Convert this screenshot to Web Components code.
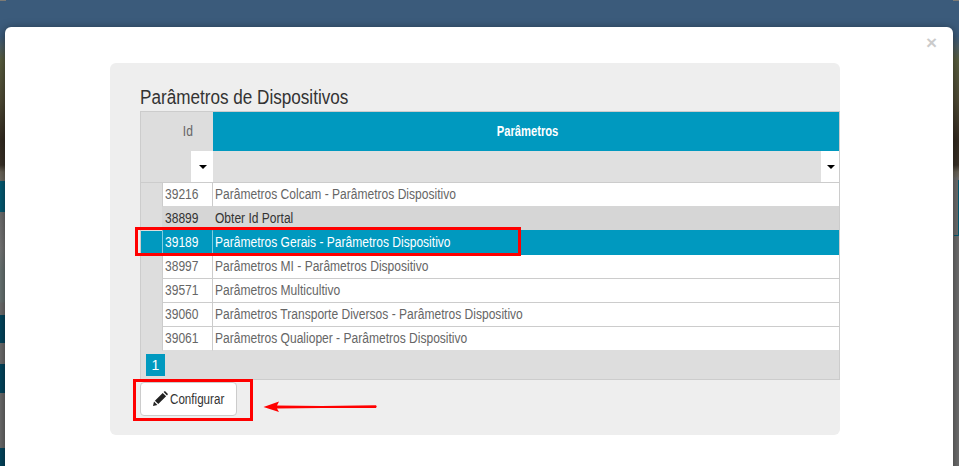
<html>
  <head>
    <meta charset="utf-8">
    <style>
      body { margin: 0; background: #666; overflow: hidden; }
    </style>
  </head>
  <body>
    <template id="tmpl-page">
      <style>
        :host {
          display: block;
          position: relative;
          width: 959px;
          height: 466px;
          overflow: hidden;
          font-family: "Liberation Sans", Arial, sans-serif;
          --blue: #0099bf;
          --line: #ccc;
          background:
            linear-gradient(#045c74, #045c74) right 180px / 1px 56px no-repeat,
            linear-gradient(#045c74, #045c74) right 235px / 5px 1px no-repeat,
            linear-gradient(to bottom,
              #7c7a74 0, #7c7a74 1px, #3b5b7b 1px, #3b5b7b 36px, #4d5f66 46px, #5b6040 60px, #504c36 100px,
              #352c22 140px, #3a3228 165px, #6a6458 172px, #706c64 177px,
              #6f6f6f 178px, #6f6f6f 466px) right top / 6px 466px no-repeat,
            linear-gradient(to bottom,
              #7c7a74 0, #7c7a74 1px, #3b5b7b 1px, #3b5b7b 36px, #4d5f66 46px, #5b6040 60px, #504c36 100px,
              #352c22 140px, #3a3228 165px, #6a6458 172px, #706c64 181px,
              #045c74 181px, #045c74 212px, #6e6e6e 212px, #777 248px, #6a7574 270px, #6a7574 302px, #6e6e6e 303px, #6e6e6e 315px,
              #03465e 315px, #03465e 343px, #6e6e6e 343px, #6e6e6e 364px,
              #03465e 364px, #03465e 393px, #6c6c6c 393px, #6c6c6c 448px,
              #03465e 448px, #03465e 466px) left top / 6px 466px no-repeat,
            #3b5b7b;
        }
        .wrap { position: relative; padding: 27px 6px 0 5px; }
      </style>
      <div class="wrap"><slot></slot></div>
      <slot name="over"></slot>
    </template>

    <template id="tmpl-modal">
      <style>
        :host {
          display: block;
          height: 460px;
          background: #fff;
          border-radius: 6px;
          box-shadow: 0 2px 10px rgba(0,0,0,.5);
        }
        .head {
          height: 36px;
          display: flex;
          justify-content: flex-end;
          padding-right: 16px;
          box-sizing: border-box;
        }
        .close {
          font-size: 19px;
          font-weight: bold;
          line-height: 32px;
          color: #000;
          opacity: .2;
        }
        .body { padding-left: 105px; }
      </style>
      <div class="head"><span class="close">×</span></div>
      <div class="body"><slot></slot></div>
    </template>

    <template id="tmpl-well">
      <style>
        :host {
          display: block;
          width: 730px;
          box-sizing: border-box;
          padding: 21px 0 19px 30px;
          background: #eee;
          border-radius: 6px;
        }
        h4 {
          margin: 0 0 1px;
          font-size: 20px;
          font-weight: normal;
          line-height: 26px;
          color: #333;
        }
        h4 span { display: inline-block; transform: scaleX(.856); transform-origin: left; white-space: nowrap; }
      </style>
      <h4><span><slot name="title"></slot></span></h4>
      <slot></slot>
    </template>

    <template id="tmpl-grid">
      <style>
        :host {
          display: block;
          width: 700px;
          box-sizing: border-box;
          border: 1px solid var(--line);
          font-size: 14px;
          background: #ddd;
        }
        .sx { display: inline-block; transform: scaleX(.86); white-space: nowrap; }
        .head { display: grid; grid-template-columns: 72px 1fr; height: 39px; line-height: 39px; }
        .head .id { padding-left: 21px; text-align: center; color: #666; }
        .head .name { padding-left: 3px; background: var(--blue); color: #fff; text-align: center; font-weight: bold; }
        .head .name .sx { transform: scaleX(.8); }
        .filter {
          display: grid;
          grid-template-columns: 50px 22px 1fr 18px;
          height: 31px;
          border-bottom: 1px solid var(--line);
        }
        .filter .blank { background: #ddd; }
        .filter .wide { background: #e0e0e0; }
        .filter .drop { background: #fff; display: flex; align-items: center; justify-content: center; }
        .drop i { width: 0; height: 0; border: 4px solid transparent; border-top-color: #000; border-bottom-width: 0; margin: 1px 0 0 2px; }
        .pager { height: 28px; box-sizing: border-box; padding: 3px 5px; background: #ddd; }
        .pager span {
          display: block;
          width: 19px;
          height: 22px;
          line-height: 22px;
          text-align: center;
          background: var(--blue);
          color: #fff;
        }
      </style>
      <div class="head"><div class="id"><span class="sx">Id</span></div><div class="name"><span class="sx">Parâmetros</span></div></div>
      <div class="filter">
        <div class="blank"></div>
        <div class="drop"><i></i></div>
        <div class="wide"></div>
        <div class="drop"><i></i></div>
      </div>
      <slot></slot>
      <div class="pager"><span>1</span></div>
    </template>

    <template id="tmpl-row">
      <style>
        :host {
          display: grid;
          grid-template-columns: 21px 51px 1fr;
          height: 24px;
          line-height: 23px;
          color: #666;
          background: #fff;
        }
        .indent { background: #ddd; }
        .id { padding-left: 2px; border-left: 1px solid var(--line); border-right: 1px solid var(--line); box-sizing: border-box; }
        .text { padding-left: 2px; }
        .id, .text { border-bottom: 1px solid var(--rule, var(--line)); }
        .sx { display: inline-block; transform: scaleX(.86); transform-origin: left; white-space: nowrap; }
        :host([alt]) { background: #d6d6d6; color: #333; }
        :host([alt]) .id { border-left-color: #d6d6d6; border-right-color: #d6d6d6; }
        :host([selected]) { background: var(--blue); color: #fff; }
        :host([selected]) .indent { background: var(--blue); }
        :host([selected]) .id { border-left-color: #7fcce0; border-right-color: #7fcce0; }
      </style>
      <div class="indent"></div>
      <div class="id"><span class="sx code"></span></div>
      <div class="text"><span class="sx"><slot></slot></span></div>
    </template>

    <template id="tmpl-button">
      <style>
        :host {
          display: inline-flex;
          align-items: center;
          box-sizing: border-box;
          width: 97px;
          height: 34px;
          margin-top: 2px;
          padding-left: 12px;
          gap: 2px;
          background: #fff;
          border: 1px solid var(--line);
          border-radius: 4px;
          color: #333;
          font-size: 14px;
          vertical-align: top;
        }
        svg { width: 15px; height: 15px; flex: none; margin-top: -2px; }
        span { display: inline-block; transform: scaleX(.83); transform-origin: left; white-space: nowrap; }
      </style>
      <svg viewBox="0 0 15 15"><path fill="#222" d="M0 15 L1 10.6 L4.4 14 Z M1.9 9.7 L9.7 1.9 L13.1 5.3 L5.3 13.1 Z M10.6 1 L11.4.3 Q11.8 0 12.2.3 L14.7 2.8 Q15 3.2 14.7 3.6 L14 4.4 Z"/></svg>
      <span><slot></slot></span>
    </template>

    <template id="tmpl-mark">
      <style>
        :host {
          position: absolute;
          box-sizing: border-box;
          border: 3px solid #f00;
          left: var(--x);
          top: var(--y);
          width: var(--w);
          height: var(--h);
        }
      </style>
    </template>

    <template id="tmpl-arrow">
      <style>
        :host { position: absolute; left: 262px; top: 398px; width: 118px; height: 18px; }
        svg { display: block; }
      </style>
      <svg width="118" height="18" viewBox="0 0 118 18">
        <path fill="#f00" d="M1.5 9 L17 3.5 L15 7.5 L60 8 L114 7.2 Q115.5 8.5 114 10 L60 10 L15 10.5 L17 14 Z"/>
      </svg>
    </template>

    <script>
      function simple(name, id) {
        customElements.define(name, class extends HTMLElement {
          connectedCallback() {
            if (this.shadowRoot) return
            this.attachShadow({mode: 'open'}).append(document.getElementById(id).content.cloneNode(true))
          }
        })
      }
      simple('app-page', 'tmpl-page')
      simple('app-modal', 'tmpl-modal')
      simple('param-well', 'tmpl-well')
      simple('param-grid', 'tmpl-grid')
      simple('config-button', 'tmpl-button')
      simple('red-mark', 'tmpl-mark')
      simple('red-arrow', 'tmpl-arrow')

      customElements.define('param-row', class extends HTMLElement {
        connectedCallback() {
          if (this.shadowRoot) return
          this.attachShadow({mode: 'open'}).append(document.getElementById('tmpl-row').content.cloneNode(true))
          this.shadowRoot.querySelector('.code').textContent = this.getAttribute('code')
        }
      })
    </script>

    <app-page>
      <app-modal>
        <param-well>
          <span slot="title">Parâmetros de Dispositivos</span>
          <param-grid>
            <param-row code="39216" style="--rule:#d6d6d6">Parâmetros Colcam - Parâmetros Dispositivo</param-row>
            <param-row code="38899" alt style="--rule:#0099bf">Obter Id Portal</param-row>
            <param-row code="39189" selected style="--rule:#0099bf">Parâmetros Gerais - Parâmetros Dispositivo</param-row>
            <param-row code="38997">Parâmetros MI - Parâmetros Dispositivo</param-row>
            <param-row code="39571">Parâmetros Multicultivo</param-row>
            <param-row code="39060">Parâmetros Transporte Diversos - Parâmetros Dispositivo</param-row>
            <param-row code="39061" style="--rule:#ddd">Parâmetros Qualioper - Parâmetros Dispositivo</param-row>
          </param-grid>
          <config-button>Configurar</config-button>
        </param-well>
      </app-modal>
      <red-mark slot="over" style="--x:135px;--y:227px;--w:386px;--h:29px"></red-mark>
      <red-mark slot="over" style="--x:133px;--y:379px;--w:120px;--h:42px"></red-mark>
      <red-arrow slot="over"></red-arrow>
    </app-page>
  </body>
</html>
